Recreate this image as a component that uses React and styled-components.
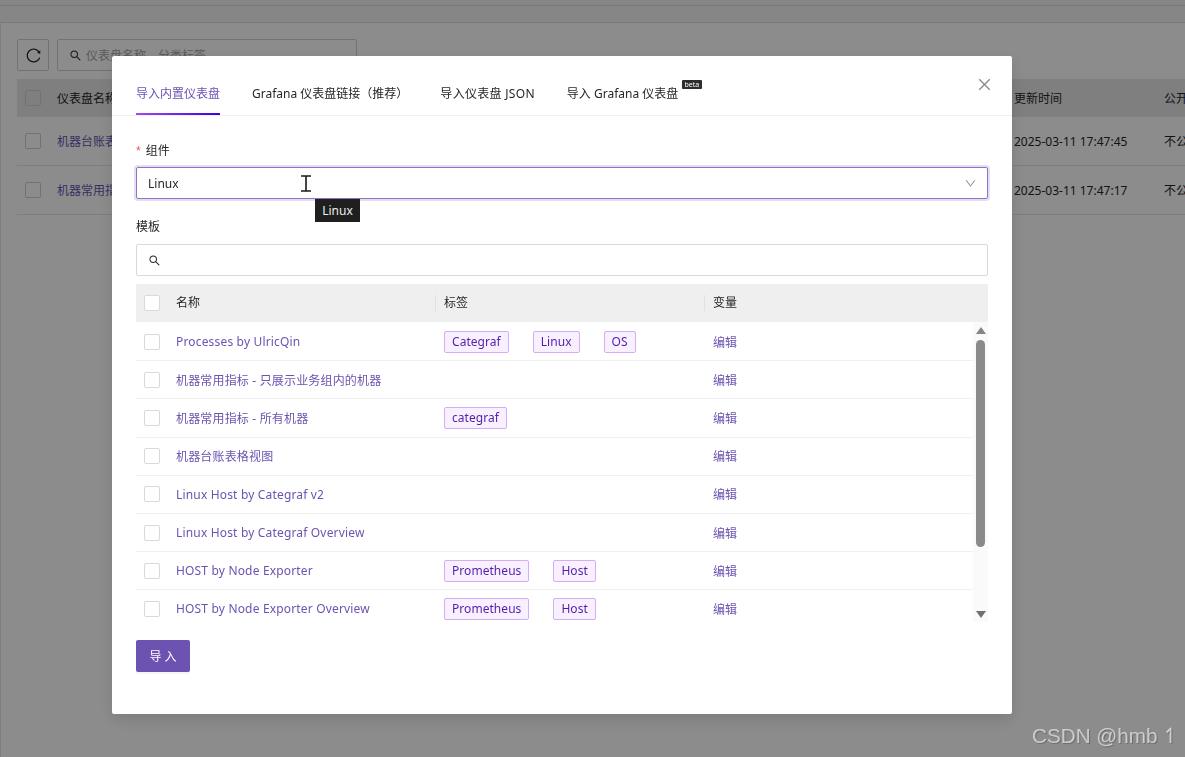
import styled, { createGlobalStyle } from "styled-components";
import {
  AiOutlineReload,
  AiOutlineSearch,
  AiOutlineClose,
  AiOutlineDown,
} from "react-icons/ai";

const FONT = `"Noto Sans", "Noto Sans CJK SC", sans-serif`;

const GlobalStyle = createGlobalStyle`
  html, body {
    margin: 0;
    height: 100%;
    overflow: hidden;
    background: #fff;
    font-family: ${FONT};
    font-size: 12px;
    color: #262626;
  }
  * { box-sizing: border-box; }
`;

const templates = [
  { name: "Processes by UlricQin", tags: ["Categraf", "Linux", "OS"] },
  { name: "机器常用指标 - 只展示业务组内的机器", tags: [] },
  { name: "机器常用指标 - 所有机器", tags: ["categraf"] },
  { name: "机器台账表格视图", tags: [] },
  { name: "Linux Host by Categraf v2", tags: [] },
  { name: "Linux Host by Categraf Overview", tags: [] },
  { name: "HOST by Node Exporter", tags: ["Prometheus", "Host"] },
  { name: "HOST by Node Exporter Overview", tags: ["Prometheus", "Host"] },
];

const backRows = [
  { name: "机器台账表格视图", time: "2025-03-11 17:47:45" },
  { name: "机器常用指标", time: "2025-03-11 17:47:17" },
];

const tabs = ["导入内置仪表盘", "Grafana 仪表盘链接（推荐）", "导入仪表盘 JSON", "导入 Grafana 仪表盘"];

export default function App() {
  return (
    <>
      <GlobalStyle />
      <Page>
        <TopStrip />
        <SubStrip />
        <Content>
          <Toolbar>
            <RefreshButton>
              <AiOutlineReload size={17} />
            </RefreshButton>
            <SearchBox>
              <AiOutlineSearch size={13} />
              <Placeholder>仪表盘名称、分类标签</Placeholder>
            </SearchBox>
          </Toolbar>
          <BackHead>
            <BackCheck />
            <span>仪表盘名称</span>
            <span />
            <BackTime>更新时间</BackTime>
            <span>公开</span>
          </BackHead>
          {backRows.map((row) => (
            <BackRow key={row.time}>
              <BackCheck />
              <BackLink>{row.name}</BackLink>
              <span />
              <BackTime>{row.time}</BackTime>
              <span>不公开</span>
            </BackRow>
          ))}
        </Content>
      </Page>

      <Overlay>
        <Modal>
          <CloseButton>
            <AiOutlineClose size={17} />
          </CloseButton>
          <TabBar>
            {tabs.map((tab, i) => (
              <Tab key={tab} $active={i === 0} $wide={i === 2}>
                {tab}
                {i === 3 && <BetaBadge>beta</BetaBadge>}
              </Tab>
            ))}
          </TabBar>

          <Body>
            <Label>
              <Required>*</Required>组件
            </Label>
            <SelectBox>
              <span>Linux</span>
              <AiOutlineDown size={13} color="#9a9a9a" />
              <TextCursor width="12" height="17" viewBox="0 0 12 17">
                <path d="M1 1h10M1 16h10M6 1v15" stroke="#1a1a1a" strokeWidth="1.6" fill="none" />
              </TextCursor>
              <Tooltip>Linux</Tooltip>
            </SelectBox>

            <Label $second>模板</Label>
            <TemplateSearch>
              <AiOutlineSearch size={13} color="#262626" />
            </TemplateSearch>

            <TableHead>
              <Checkbox />
              <HeadCell>名称</HeadCell>
              <HeadCell $divider>标签</HeadCell>
              <HeadCell $divider>变量</HeadCell>
            </TableHead>

            <TableScroll>
              <RowList>
                {templates.map((item) => (
                  <Row key={item.name}>
                    <Checkbox />
                    <NameCell>{item.name}</NameCell>
                    <TagCell>
                      {item.tags.map((tag) => (
                        <Tag key={tag}>{tag}</Tag>
                      ))}
                    </TagCell>
                    <EditCell>编辑</EditCell>
                  </Row>
                ))}
              </RowList>
              <ScrollTrack>
                <Arrow viewBox="0 0 10 7">
                  <path d="M5 0l5 7H0z" fill="#858585" />
                </Arrow>
                <Thumb />
                <Arrow viewBox="0 0 10 7">
                  <path d="M5 7L0 0h10z" fill="#707070" />
                </Arrow>
              </ScrollTrack>
            </TableScroll>

            <ImportButton>导 入</ImportButton>
          </Body>
        </Modal>
        <Watermark>
          CSDN @hmb<Harpoon>↿</Harpoon>
        </Watermark>
      </Overlay>
    </>
  );
}

const Page = styled.div`
  width: 1185px;
  height: 757px;
  overflow: hidden;
`;
const TopStrip = styled.div`
  height: 6px;
  background: #f4f5f8;
  border-bottom: 1px solid #dcdcdc;
`;
const SubStrip = styled.div`
  height: 17px;
  background: #f5f5f5;
  border-bottom: 1px solid #dfdfdf;
`;
const Content = styled.div`
  padding: 16px 0 0 16px;
  border-left: 1px solid #e4e4e4;
  height: 734px;
`;
const Toolbar = styled.div`
  display: flex;
  gap: 8px;
  height: 32px;
`;
const RefreshButton = styled.div`
  width: 32px;
  height: 32px;
  border: 1px solid #d0d0d0;
  border-radius: 2px;
  display: flex;
  align-items: center;
  justify-content: center;
`;
const SearchBox = styled.div`
  width: 300px;
  height: 32px;
  border: 1px solid #d0d0d0;
  border-radius: 2px;
  display: flex;
  align-items: center;
  gap: 4px;
  padding-left: 11px;
`;
const Placeholder = styled.span`
  color: #a8a8a8;
`;
const BackHead = styled.div`
  margin-top: 8px;
  width: 1168px;
  height: 38px;
  background: #e8e8e8;
  display: grid;
  grid-template-columns: 32px 200px 757px 150px 1fr;
  align-items: center;
  padding-left: 8px;
  white-space: nowrap;
`;
const BackRow = styled(BackHead)`
  margin-top: 0;
  height: 49px;
  background: #fff;
  border-bottom: 1px solid #e6e6e6;
`;
const BackCheck = styled.div`
  width: 16px;
  height: 16px;
  border: 1px solid #d0d0d0;
  border-radius: 2px;
`;
const BackLink = styled.span`
  color: #6c53b1;
`;
const BackTime = styled.span`
  font-size: 12px;
`;

const Overlay = styled.div`
  position: fixed;
  inset: 0;
  background: rgba(0, 0, 0, 0.45);
  padding: 56px 0 0 112px;
`;
const Modal = styled.div`
  position: relative;
  width: 900px;
  height: 658px;
  background: #fff;
  border-radius: 2px;
  box-shadow: 0 6px 16px rgba(0, 0, 0, 0.12);
`;
const CloseButton = styled.div`
  position: absolute;
  top: 20px;
  right: 19px;
  color: #8a8a8a;
  display: flex;
`;
const TabBar = styled.div`
  height: 60px;
  display: flex;
  gap: 32px;
  padding: 0 24px;
  border-bottom: 1px solid #f0f0f0;
`;
const Tab = styled.div`
  position: relative;
  height: 59px;
  padding-top: 29px;
  line-height: 18px;
  font-size: 12px;
  white-space: nowrap;
  letter-spacing: ${(p) => (p.$wide ? "0.3px" : "0")};
  color: ${(p) => (p.$active ? "#6c53b1" : "#262626")};
  border-bottom: 2px solid transparent;
  border-image: ${(p) =>
    p.$active ? "linear-gradient(90deg, #a24bf0, #3700e6) 1" : "none"};
`;
const BetaBadge = styled.span`
  position: absolute;
  top: 24px;
  left: 115px;
  width: 20px;
  height: 9px;
  background: #2e2e2e;
  color: #fff;
  font-size: 7px;
  line-height: 9px;
  text-align: center;
  border-radius: 1px;
`;
const Body = styled.div`
  padding: 24px 24px 0;
`;
const Label = styled.div`
  height: 20px;
  line-height: 22px;
  margin-top: ${(p) => (p.$second ? "17px" : "0")};
  margin-bottom: ${(p) => (p.$second ? "8px" : "7px")};
  color: #262626;
`;
const Required = styled.span`
  color: #ff4d4f;
  margin-right: 5px;
  font-family: "Liberation Sans", sans-serif;
`;
const SelectBox = styled.div`
  position: relative;
  height: 32px;
  border: 1px solid #8f72c4;
  border-radius: 2px;
  box-shadow: 0 0 0 2px #e4dff0;
  display: flex;
  align-items: center;
  justify-content: space-between;
  padding: 0 10px 0 11px;
`;
const TextCursor = styled.svg`
  position: absolute;
  left: 163px;
  top: 7px;
`;
const Tooltip = styled.div`
  position: absolute;
  left: 178px;
  top: 31px;
  width: 45px;
  height: 23px;
  background: #1f1f1f;
  color: #eee;
  font-size: 12px;
  line-height: 23px;
  text-align: center;
`;
const TemplateSearch = styled.div`
  height: 32px;
  border: 1px solid #d9d9d9;
  border-radius: 2px;
  display: flex;
  align-items: center;
  padding-left: 11px;
`;
const Checkbox = styled.div`
  width: 16px;
  height: 16px;
  background: #fff;
  border: 1px solid #d9d9d9;
  border-radius: 2px;
`;
const TableHead = styled.div`
  margin-top: 8px;
  height: 38px;
  background: #efefef;
  display: grid;
  grid-template-columns: 32px 259px 269px 1fr;
  align-items: center;
  padding-left: 8px;
`;
const HeadCell = styled.div`
  height: 16px;
  line-height: 16px;
  padding-left: ${(p) => (p.$divider ? "8px" : "0")};
  border-left: ${(p) => (p.$divider ? "1px solid #e0e0e0" : "none")};
`;
const TableScroll = styled.div`
  display: flex;
  height: 300px;
`;
const RowList = styled.div`
  flex: 1;
  overflow: hidden;
  padding-top: 1px;
`;
const Row = styled.div`
  height: 38.2px;
  display: grid;
  grid-template-columns: 32px 259px 269px 1fr;
  align-items: center;
  padding-left: 8px;
  border-bottom: 1px solid #f0f0f0;
`;
const NameCell = styled.div`
  color: #6c53b1;
  white-space: nowrap;
  letter-spacing: 0.17px;
`;
const TagCell = styled.div`
  display: flex;
  gap: 24px;
  padding-left: 9px;
`;
const Tag = styled.span`
  height: 22px;
  padding: 0 7px;
  line-height: 20px;
  font-size: 12px;
  letter-spacing: 0.05px;
  color: #531dab;
  background: #f9f0ff;
  border: 1px solid #d3adf7;
  border-radius: 2px;
`;
const EditCell = styled.div`
  padding-left: 9px;
  color: #6c53b1;
`;
const ScrollTrack = styled.div`
  width: 15px;
  background: #fafafa;
  display: flex;
  flex-direction: column;
  align-items: center;
  padding-top: 5px;
`;
const Arrow = styled.svg`
  width: 10px;
  height: 7px;
  flex: none;
`;
const Thumb = styled.div`
  width: 9px;
  height: 207px;
  margin: 6px 0 64px;
  background: #8a8a8a;
  border-radius: 5px;
`;
const ImportButton = styled.div`
  margin-top: 18px;
  width: 54px;
  height: 32px;
  background: #6c53b1;
  color: #fff;
  border-radius: 2px;
  line-height: 33px;
  text-align: center;
  box-shadow: 0 2px 0 rgba(0, 0, 0, 0.04);
`;
const Watermark = styled.div`
  position: absolute;
  left: 1032px;
  top: 721px;
  font-family: "Liberation Sans", "DejaVu Sans", sans-serif;
  font-size: 20.7px;
  line-height: 30px;
  white-space: nowrap;
  color: rgba(255, 255, 255, 0.6);
  text-shadow: 1px 1px 1px rgba(0, 0, 0, 0.25);
`;
const Harpoon = styled.span`
  margin-left: 4px;
`;
